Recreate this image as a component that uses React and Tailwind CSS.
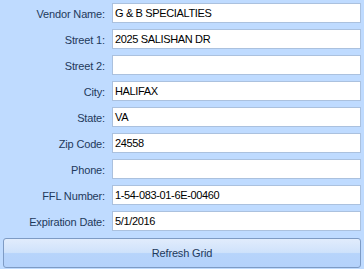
import React from "react";

const rows = [
  ["Vendor Name:", "G & B SPECIALTIES"],
  ["Street 1:", "2025 SALISHAN DR"],
  ["Street 2:", ""],
  ["City:", "HALIFAX"],
  ["State:", "VA"],
  ["Zip Code:", "24558"],
  ["Phone:", ""],
  ["FFL Number:", "1-54-083-01-6E-00460"],
  ["Expiration Date:", "5/1/2016"],
];

export default function App() {
  return (
    <div
      className="w-[364px] h-[269px] bg-[#bfdbff] px-[3px] pt-[3px] flex flex-col overflow-hidden"
      style={{ fontFamily: '"Liberation Sans", Arial, sans-serif' }}
    >
      <div className="flex flex-col gap-[6px]">
        {rows.map(([label, value]) => (
          <div key={label} className="flex items-center h-[20px]">
            <div className="w-[109px] pr-[7px] text-right text-[11px] tracking-[-0.15px] text-[#1e395b] leading-none pt-[2px]">
              {label}
            </div>
            <div className="w-[249px] h-[20px] bg-white border border-[#abc1de] flex items-center pl-[2px] text-[11px] tracking-[-0.35px] text-black leading-none whitespace-nowrap">
              {value}
            </div>
          </div>
        ))}
      </div>
      <div className="mt-[7px] w-[358px] h-[30px] rounded-[3px] border border-[#7e9bc4] bg-[linear-gradient(to_bottom,#e1ecfc_0%,#cfe2fb_48%,#b7d4fb_52%,#b4d2fb_100%)] flex items-center justify-center text-[11px] tracking-[-0.15px] text-[#1e395b]">
        Refresh Grid
      </div>
    </div>
  );
}
